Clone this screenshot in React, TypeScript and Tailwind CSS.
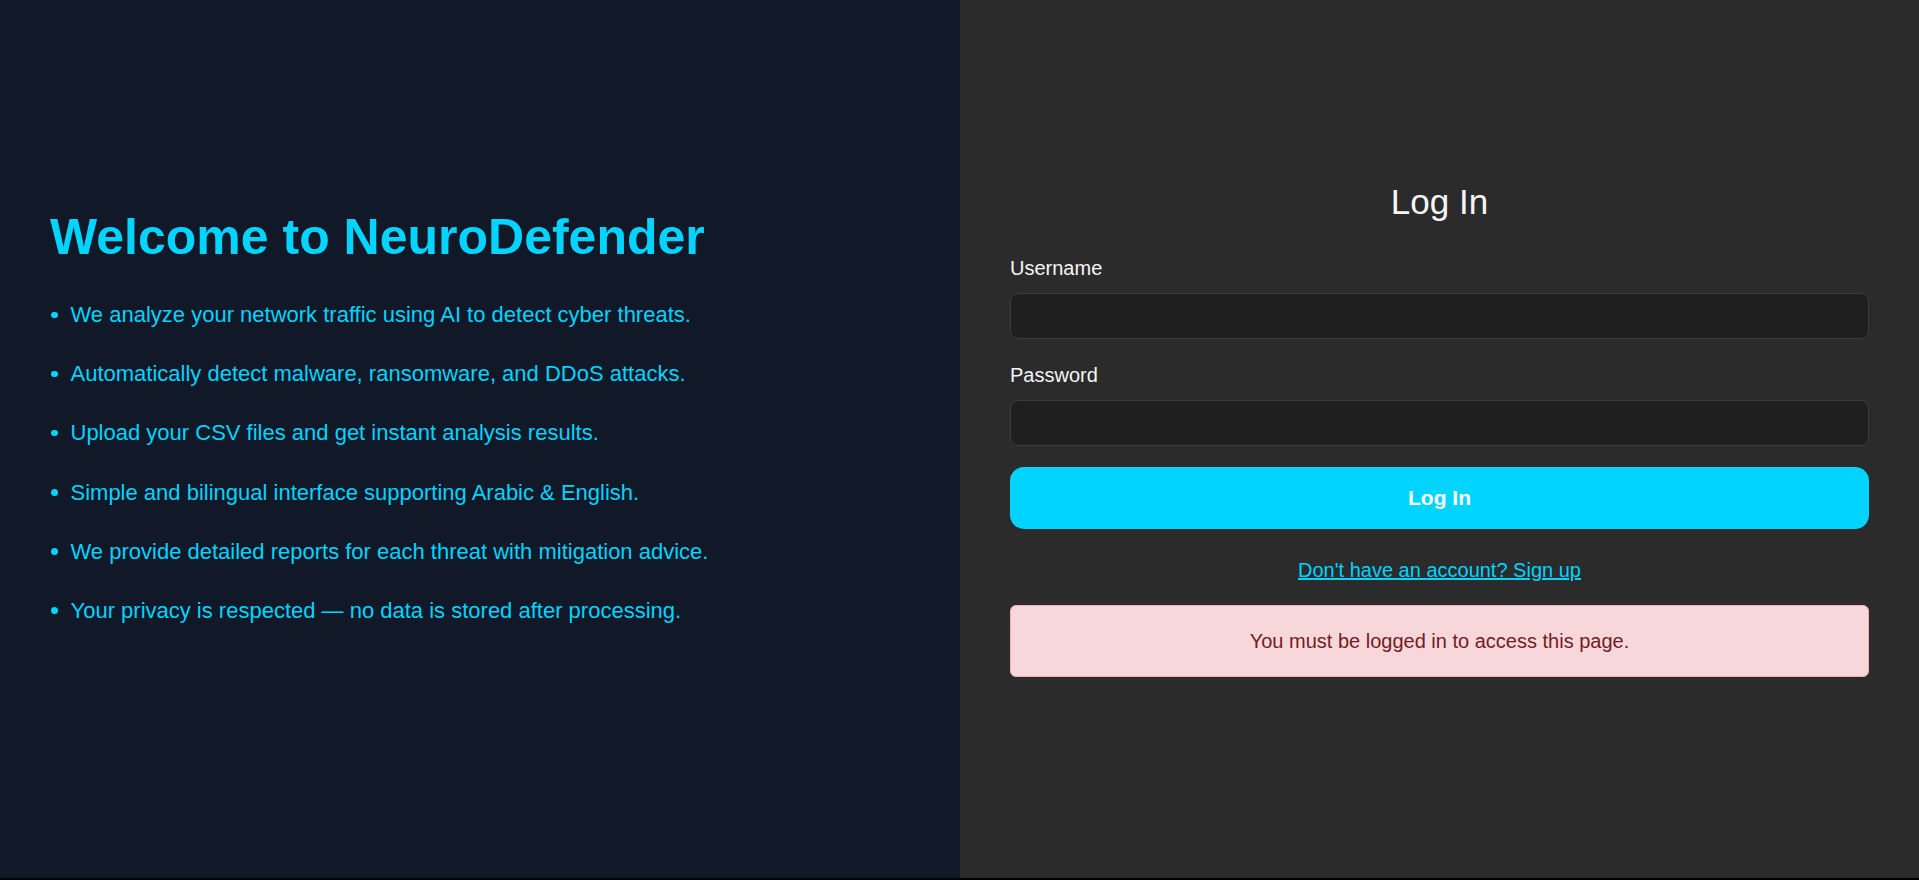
import React from "react";

const features = [
  "We analyze your network traffic using AI to detect cyber threats.",
  "Automatically detect malware, ransomware, and DDoS attacks.",
  "Upload your CSV files and get instant analysis results.",
  "Simple and bilingual interface supporting Arabic & English.",
  "We provide detailed reports for each threat with mitigation advice.",
  "Your privacy is respected — no data is stored after processing.",
];

export default function App() {
  return (
    <div
      className="h-[880px] w-full bg-black"
      style={{ fontFamily: '"Liberation Sans", Arial, sans-serif' }}
    >
      <div className="flex h-[878px] w-full">
        <section className="w-[960px] shrink-0 bg-[#111827] px-[50px] pt-[207px]">
          <h1 className="text-[50px] font-bold leading-[60px] text-[#00d4ff]">
            Welcome to NeuroDefender
          </h1>
          <ul className="mt-[30px]">
            {features.map((f) => (
              <li
                key={f}
                className="mb-[23.7px] flex items-center text-[22px] leading-[35.5px] text-[#00d4ff]"
              >
                <span className="ml-[1px] mr-[13px] h-[6.5px] w-[6.5px] shrink-0 rounded-full bg-[#00d4ff]" />
                <span>{f}</span>
              </li>
            ))}
          </ul>
        </section>
        <section className="flex-1 bg-[#2b2b2b] px-[50px] pt-[181px]">
          <h2 className="text-center text-[35px] font-normal leading-[42px] text-[#f5f5f5]">
            Log In
          </h2>
          <form className="mt-[33px] flex flex-col" onSubmit={(e) => e.preventDefault()}>
            <label className="mb-[13px] block text-[20px] leading-[24px] text-[#f5f5f5]">
              Username
            </label>
            <input
              type="text"
              className="mb-[24px] h-[46px] w-full rounded-[8px] border border-[#3c3c3c] bg-[#1f1f1f] px-3 text-white outline-none"
            />
            <label className="mb-[13px] block text-[20px] leading-[24px] text-[#f5f5f5]">
              Password
            </label>
            <input
              type="password"
              className="h-[46px] w-full rounded-[8px] border border-[#3c3c3c] bg-[#1f1f1f] px-3 text-white outline-none"
            />
            <button
              type="submit"
              className="mt-[21px] h-[62px] w-full rounded-[14px] bg-[#00d4ff] text-[21px] font-bold text-white"
            >
              Log In
            </button>
          </form>
          <div className="mt-[29px] text-center text-[20px] leading-[24px]">
            <a href="#" className="text-[#00d4ff] underline">
              Don't have an account? Sign up
            </a>
          </div>
          <div className="mt-[23px] flex h-[72px] items-center justify-center rounded-[6px] border border-[#f1b0b7] bg-[#f8d7da] text-[20px] text-[#721c24]">
            You must be logged in to access this page.
          </div>
        </section>
      </div>
    </div>
  );
}
